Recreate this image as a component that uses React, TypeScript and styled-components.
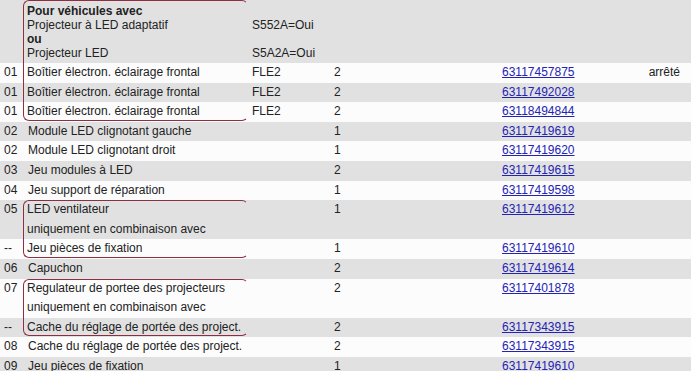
import styled, { createGlobalStyle } from "styled-components";

type Part = {
  num: string;
  lines: string[];
  code?: string;
  qty: string;
  ref: string;
  note?: string;
};

const firstGroup: Part[] = [
  { num: "01", lines: ["Boîtier électron. éclairage frontal"], code: "FLE2", qty: "2", ref: "63117457875", note: "arrêté" },
  { num: "01", lines: ["Boîtier électron. éclairage frontal"], code: "FLE2", qty: "2", ref: "63117492028" },
  { num: "01", lines: ["Boîtier électron. éclairage frontal"], code: "FLE2", qty: "2", ref: "63118494844" },
];

const singles: Part[] = [
  { num: "02", lines: ["Module LED clignotant gauche"], qty: "1", ref: "63117419619" },
  { num: "02", lines: ["Module LED clignotant droit"], qty: "1", ref: "63117419620" },
  { num: "03", lines: ["Jeu modules à LED"], qty: "2", ref: "63117419615" },
  { num: "04", lines: ["Jeu support de réparation"], qty: "1", ref: "63117419598" },
];

const fanGroup: Part[] = [
  { num: "05", lines: ["LED ventilateur", "uniquement en combinaison avec"], qty: "1", ref: "63117419612" },
  { num: "--", lines: ["Jeu pièces de fixation"], qty: "1", ref: "63117419610" },
];

const capRow: Part = { num: "06", lines: ["Capuchon"], qty: "2", ref: "63117419614" };

const rangeGroup: Part[] = [
  { num: "07", lines: ["Regulateur de portee des projecteurs", "uniquement en combinaison avec"], qty: "2", ref: "63117401878" },
  { num: "--", lines: ["Cache du réglage de portée des project."], qty: "2", ref: "63117343915" },
];

const tail: Part[] = [
  { num: "08", lines: ["Cache du réglage de portée des project."], qty: "2", ref: "63117343915" },
  { num: "09", lines: ["Jeu pièces de fixation"], qty: "1", ref: "63117419610" },
];

function PartRow({ part, shaded, inGroup }: { part: Part; shaded: boolean; inGroup?: boolean }) {
  return (
    <Row $shaded={shaded}>
      <Num>{part.num}</Num>
      <Desc $inGroup={inGroup}>
        {part.lines.map((l, i) => (
          <div key={i}>{l}</div>
        ))}
      </Desc>
      <Cell>{part.code}</Cell>
      <Cell>{part.qty}</Cell>
      <Cell>
        <RefLink href="#">{part.ref}</RefLink>
      </Cell>
      <Note>{part.note}</Note>
    </Row>
  );
}

function App() {
  let stripe = 0;
  const next = () => stripe++ % 2 === 1;

  return (
    <>
      <GlobalStyle />
      <Table>
        <Group>
          <HeadRow>
            <Num />
            <HeadLines>
              <Bold>Pour véhicules avec</Bold>
              <div>Projecteur à LED adaptatif</div>
              <Bold>ou</Bold>
              <div>Projecteur LED</div>
            </HeadLines>
            <HeadLines>
              <div>&nbsp;</div>
              <div>S552A=Oui</div>
              <div>&nbsp;</div>
              <div>S5A2A=Oui</div>
            </HeadLines>
          </HeadRow>
          {firstGroup.map((p, i) => (
            <PartRow key={i} part={p} shaded={next()} inGroup />
          ))}
        </Group>
        {singles.map((p, i) => (
          <PartRow key={i} part={p} shaded={next()} />
        ))}
        <Group>
          {fanGroup.map((p, i) => (
            <PartRow key={i} part={p} shaded={next()} inGroup />
          ))}
        </Group>
        <PartRow part={capRow} shaded={next()} />
        <Group>
          {rangeGroup.map((p, i) => (
            <PartRow key={i} part={p} shaded={next()} inGroup />
          ))}
        </Group>
        {tail.map((p, i) => (
          <PartRow key={i} part={p} shaded={next()} />
        ))}
      </Table>
    </>
  );
}

export default App;

const GlobalStyle = createGlobalStyle`
  html, body {
    margin: 0;
    padding: 0;
    background: #ffffff;
    overflow: hidden;
  }
  body {
    font-family: "Liberation Sans", Arial, sans-serif;
    font-size: 12px;
    color: #222222;
  }
`;

const Table = styled.div`
  width: 691px;
  display: flex;
  flex-direction: column;
`;

// bracket drawn over the grouped rows
const Group = styled.div`
  position: relative;
  display: flex;
  flex-direction: column;

  &::after {
    content: "";
    position: absolute;
    left: 23px;
    width: 223px;
    top: 0;
    bottom: 1px;
    border: 1px solid #8d2f43;
    border-right-color: transparent;
    border-radius: 6px;
    pointer-events: none;
  }
`;

const columns = "24px 228px 82px 168px 138px 1fr";

const HeadRow = styled.div`
  display: grid;
  grid-template-columns: ${columns};
  background: #e1e1e1;
  height: 63px;
  padding-top: 4px;
  box-sizing: border-box;
`;

const HeadLines = styled.div`
  display: flex;
  flex-direction: column;
  line-height: 14px;
  padding-left: 3px;

  & + & {
    padding-left: 0;
  }
`;

const Bold = styled.div`
  font-weight: 700;
`;

const Row = styled.div<{ $shaded: boolean }>`
  display: grid;
  grid-template-columns: ${columns};
  background: ${(p) => (p.$shaded ? "#e1e1e1" : "#fcfcfc")};
  line-height: 19.6px;
`;

const Num = styled.div`
  padding-left: 4px;
`;

const Desc = styled.div<{ $inGroup?: boolean }>`
  padding-left: ${(p) => (p.$inGroup ? "3px" : "4px")};
  white-space: nowrap;
`;

const Cell = styled.div`
  white-space: nowrap;
`;

const Note = styled.div`
  text-align: right;
  padding-right: 11px;
`;

const RefLink = styled.a`
  color: #2323b5;
  text-decoration: underline;
`;
